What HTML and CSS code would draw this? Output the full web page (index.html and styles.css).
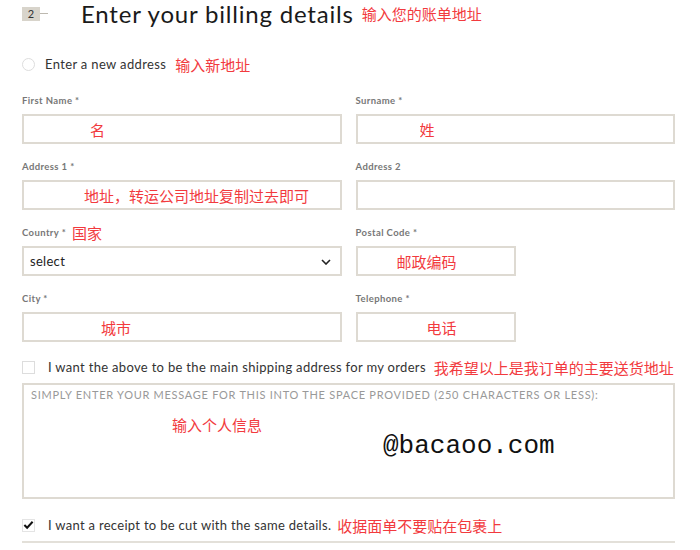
FILE: index.html
```html
<!DOCTYPE html>
<html lang="zh-CN">

<head>
    <meta charset="UTF-8">
    <meta name="viewport" content="width=device-width, initial-scale=1.0">
    <title>Billing Details</title>
    <link rel="stylesheet" href="styles.css">
</head>

<body>
    <div class="page">
        <div class="step-header">
            <span class="step-badge">2</span>
            <span class="step-line"></span>
            <h1>Enter your billing details</h1>
            <span class="note note-title">输入您的账单地址</span>
        </div>

        <div class="option-row new-address">
            <span class="radio"></span>
            <span class="option-text">Enter a new address</span>
            <span class="note">输入新地址</span>
        </div>

        <div class="fields">
            <div class="field">
                <label>First Name *</label>
                <input type="text" class="input note-name" value="名">
            </div>
            <div class="field">
                <label>Surname *</label>
                <input type="text" class="input note-surname" value="姓">
            </div>
            <div class="field">
                <label>Address 1 *</label>
                <input type="text" class="input note-address" value="地址，转运公司地址复制过去即可">
            </div>
            <div class="field">
                <label>Address 2</label>
                <input type="text" class="input">
            </div>
            <div class="field">
                <label>Country * <span class="note">国家</span></label>
                <div class="select-wrap">
                    <select class="input select">
                        <option>select</option>
                    </select>
                    <svg class="chevron" width="10" height="6" viewBox="0 0 10 6">
                        <path d="M1 1 L5 5 L9 1" fill="none" stroke="#222" stroke-width="1.6" />
                    </svg>
                </div>
            </div>
            <div class="field">
                <label>Postal Code *</label>
                <input type="text" class="input short note-postal" value="邮政编码">
            </div>
            <div class="field">
                <label>City *</label>
                <input type="text" class="input note-city" value="城市">
            </div>
            <div class="field">
                <label>Telephone *</label>
                <input type="text" class="input short note-phone" value="电话">
            </div>
        </div>

        <div class="option-row main-shipping">
            <span class="checkbox"></span>
            <span class="option-text">I want the above to be the main shipping address for my orders</span>
            <span class="note">我希望以上是我订单的主要送货地址</span>
        </div>

        <div class="message-box">
            <div class="placeholder">Simply enter your message for this into the space provided (250 characters or less):</div>
            <div class="message-body">
                <span class="note note-message">输入个人信息</span>
                <span class="watermark">@bacaoo.com</span>
            </div>
        </div>

        <div class="option-row receipt">
            <span class="checkbox checked">
                <svg width="12" height="10" viewBox="0 0 12 10">
                    <path d="M1.5 5 L4.5 8 L10.5 1.5" fill="none" stroke="#111" stroke-width="2.2" />
                </svg>
            </span>
            <span class="option-text">I want a receipt to be cut with the same details.</span>
            <span class="note">收据面单不要贴在包裹上</span>
        </div>
    </div>
</body>

</html>
```

FILE: styles.css
```css
body {
    margin: 0;
    padding: 0;
    background-color: #fff;
    font-family: "Lato", "Open Sans", Arial, sans-serif;
    color: #333;
}

.page {
    width: 653px;
    padding-left: 22px;
}

.note {
    font-family: "Noto Sans CJK SC", sans-serif;
    font-size: 15px;
    color: #f23a3e;
    font-weight: normal;
    letter-spacing: 0;
    white-space: nowrap;
}

/* header */
.step-header {
    display: flex;
    align-items: center;
    height: 27px;
}

.step-badge {
    width: 18px;
    height: 14px;
    background-color: #d8d4cb;
    font-size: 11px;
    line-height: 14px;
    text-align: center;
    color: #333;
}

.step-line {
    width: 8px;
    height: 1px;
    background-color: #bdb9b0;
}

.step-header h1 {
    margin: 0 0 0 33px;
    font-size: 24px;
    font-weight: normal;
    color: #1a1a1a;
    letter-spacing: 0.8px;
}

.note-title {
    margin-left: 8px;
}

/* option rows */
.option-row {
    display: flex;
    align-items: center;
    height: 20px;
    font-size: 13px;
    white-space: nowrap;
}

.new-address {
    margin-top: 27px;
}

.radio {
    width: 11px;
    height: 11px;
    border: 1px solid #ddd;
    border-radius: 50%;
    margin-right: 10px;
}

.checkbox {
    flex-shrink: 0;
    width: 11px;
    height: 11px;
    border: 1px solid #ddd;
    margin-right: 13px;
    display: flex;
    align-items: center;
    justify-content: center;
}

.checkbox.checked {
    border-color: #e4e4e4;
}

.option-text {
    margin-right: 9px;
    color: #333;
    letter-spacing: 0.35px;
}

.main-shipping .option-text {
    letter-spacing: 0.32px;
    margin-right: 8px;
}

.receipt .option-text {
    letter-spacing: 0.3px;
    margin-right: 6px;
}

/* fields */
.fields {
    margin-top: 20px;
    display: grid;
    grid-template-columns: 1fr 1fr;
    column-gap: 14px;
    row-gap: 16px;
}

.field label {
    display: flex;
    align-items: center;
    gap: 6px;
    height: 12px;
    margin-bottom: 8px;
    font-size: 9.5px;
    font-weight: bold;
    letter-spacing: 0.4px;
    color: #777;
}

.input {
    box-sizing: border-box;
    width: 100%;
    height: 30px;
    margin: 0;
    border: 2px solid #dedad2;
    background-color: #fff;
    font-family: "Noto Sans CJK SC", sans-serif;
    font-size: 15px;
    color: #f23a3e;
    padding: 0;
    outline: none;
}

.input.short {
    width: 160px;
}

.note-name { padding-left: 66px; }
.note-surname { padding-left: 62px; }
.note-address { padding-left: 60px; }
.note-postal { padding-left: 39px; }
.note-city { padding-left: 77px; }
.note-phone { padding-left: 69px; }

.select-wrap {
    position: relative;
}

.select {
    appearance: none;
    -webkit-appearance: none;
    font-family: "Lato", "Open Sans", Arial, sans-serif;
    font-size: 13px;
    letter-spacing: 0.3px;
    color: #222;
    padding-left: 6px;
}

.chevron {
    position: absolute;
    right: 11px;
    top: 13px;
}

/* message */
.main-shipping {
    margin-top: 15px;
}

.message-box {
    box-sizing: border-box;
    margin-top: 6px;
    height: 116px;
    border: 2px solid #dedad2;
    padding: 3px 0 0 7px;
}

.placeholder {
    font-size: 11px;
    text-transform: uppercase;
    letter-spacing: 0.72px;
    color: #999;
}

.message-body {
    display: flex;
    align-items: flex-start;
    padding-left: 141px;
    margin-top: 13px;
}

.watermark {
    margin-left: 121px;
    margin-top: 17px;
    font-family: "Liberation Mono", monospace;
    font-size: 26px;
    color: #111;
}

/* receipt */
.receipt {
    margin-top: 16px;
    padding-bottom: 6px;
    border-bottom: 2px solid #e3e0d9;
}
```
